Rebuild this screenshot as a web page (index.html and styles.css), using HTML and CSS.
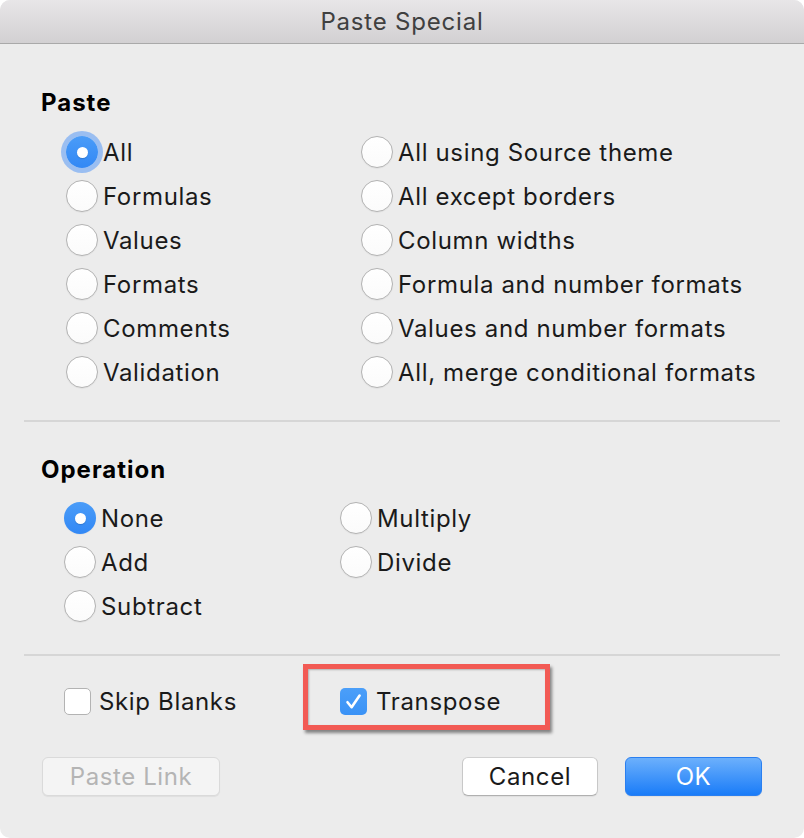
FILE: index.html
```html
<!DOCTYPE html>
<html>
<head>
<meta charset="utf-8">
<link rel="stylesheet" href="styles.css">
</head>
<body>
<div class="window">
  <div class="titlebar">Paste Special</div>
  <div class="content">
    <div class="section paste">
      <div class="heading">Paste</div>
      <div class="grid grid-paste">
        <div class="opt"><span class="radio on focus"></span><span>All</span></div>
        <div class="opt"><span class="radio"></span><span>All using Source theme</span></div>
        <div class="opt"><span class="radio"></span><span>Formulas</span></div>
        <div class="opt"><span class="radio"></span><span>All except borders</span></div>
        <div class="opt"><span class="radio"></span><span>Values</span></div>
        <div class="opt"><span class="radio"></span><span>Column widths</span></div>
        <div class="opt"><span class="radio"></span><span>Formats</span></div>
        <div class="opt"><span class="radio"></span><span>Formula and number formats</span></div>
        <div class="opt"><span class="radio"></span><span>Comments</span></div>
        <div class="opt"><span class="radio"></span><span>Values and number formats</span></div>
        <div class="opt"><span class="radio"></span><span>Validation</span></div>
        <div class="opt"><span class="radio"></span><span>All, merge conditional formats</span></div>
      </div>
    </div>
    <div class="sep sep1"></div>
    <div class="section operation">
      <div class="heading">Operation</div>
      <div class="grid grid-op">
        <div class="opt"><span class="radio on"></span><span>None</span></div>
        <div class="opt"><span class="radio"></span><span>Multiply</span></div>
        <div class="opt"><span class="radio"></span><span>Add</span></div>
        <div class="opt"><span class="radio"></span><span>Divide</span></div>
        <div class="opt"><span class="radio"></span><span>Subtract</span></div>
      </div>
    </div>
    <div class="sep sep2"></div>
    <div class="checks">
      <div class="opt check-skip"><span class="check"></span><span>Skip Blanks</span></div>
      <div class="highlight">
        <div class="opt"><span class="check on"><svg viewBox="0 0 27 27" width="27" height="27"><path d="M7.5 14.2 L11.6 19.2 L19.6 7.6" fill="none" stroke="#fff" stroke-width="2.6" stroke-linecap="round" stroke-linejoin="round"/></svg></span><span>Transpose</span></div>
      </div>
    </div>
  </div>
  <div class="buttons">
    <button class="btn disabled">Paste Link</button>
    <div class="spacer"></div>
    <button class="btn">Cancel</button>
    <button class="btn primary">OK</button>
  </div>
</div>
</body>
</html>
```
FILE: styles.css
```css
* { box-sizing: border-box; }
html, body { margin: 0; padding: 0; background: #ffffff; }
body { font-family: Inter, "Noto Sans", "Liberation Sans", sans-serif; color: #1e1e1e; }

.window {
  width: 804px;
  height: 838px;
  background: #ececec;
  border-radius: 10px;
  overflow: hidden;
  position: relative;
}

.titlebar {
  height: 44px;
  background: linear-gradient(#e8e6e8, #d2d0d2);
  border-bottom: 1px solid #a9a9a9;
  text-align: center;
  font-size: 24px;
  line-height: 44px;
  letter-spacing: 0.8px;
  color: #404040;
}

.content { padding: 0 24px; }

.heading {
  font-weight: 700;
  font-size: 24px;
  line-height: 28px;
  height: 28px;
  letter-spacing: 1px;
  color: #000;
  padding-left: 17px;
}

.paste { padding-top: 45px; }
.paste .heading { margin-bottom: 13px; }

.grid { display: grid; }
.grid-paste { grid-template-columns: 295px 1fr; padding-left: 42px; }
.grid-op { grid-template-columns: 276px 1fr; padding-left: 40px; }

.opt {
  display: flex;
  align-items: center;
  gap: 5px;
  height: 44px;
  font-size: 24px;
  letter-spacing: 0.65px;
  color: #1a1a1a;
}

.radio {
  width: 32px;
  height: 32px;
  border-radius: 50%;
  border: 1px solid #b3b3b3;
  background: linear-gradient(#ffffff, #fbfbfb);
  box-shadow: 0 0.5px 1px rgba(0,0,0,0.08);
  flex: none;
  position: relative;
}
.radio.on {
  border: none;
  background: linear-gradient(#4a9cf8, #3288f5);
}
.radio.on::after {
  content: "";
  position: absolute;
  left: 10.5px;
  top: 10.5px;
  width: 11px;
  height: 11px;
  border-radius: 50%;
  background: #fff;
  box-shadow: 0 1px 1px rgba(0,0,0,0.15);
}
.radio.focus { box-shadow: 0 0 0 5px rgba(100,160,245,0.6); }

.sep {
  height: 2px;
  background: #d6d6d6;
}
.sep1 { margin-top: 26px; }

.operation { padding-top: 34px; }
.operation .heading { margin-bottom: 12px; }

.sep2 { margin-top: 26px; }

.checks {
  display: flex;
  align-items: flex-start;
  padding-top: 8px;
}
.check-skip {
  padding-left: 40px;
  width: 279px;
  gap: 8px;
  margin-top: 24px;
  height: 27px;
}

.check {
  width: 27px;
  height: 27px;
  border-radius: 5px;
  border: 1px solid #b3b3b3;
  background: #fff;
  flex: none;
  display: flex;
}
.check.on { border: none; background: linear-gradient(#4b9ff9, #3a92f6); }

.highlight {
  width: 247px;
  height: 66px;
  border: 5px solid #f25a54;
  box-shadow: 2px 3px 3px rgba(0,0,0,0.45), inset 1px 1px 2px rgba(0,0,0,0.25);
  padding: 19px 0 0 32px;
}
.highlight .opt { gap: 9px; height: 27px; }

.buttons {
  display: flex;
  align-items: center;
  gap: 27px;
  padding: 27px 42px 0 42px;
}
.spacer { flex: 1; }
.buttons .spacer { margin-left: -27px; }

.btn {
  height: 39px;
  width: 136px;
  border-radius: 6px;
  border: 1px solid #c8c8c8;
  border-top-color: #d0d0d0;
  border-bottom-color: #b0b0b0;
  background: #fff;
  font-family: inherit;
  font-size: 24px;
  letter-spacing: 0.6px;
  color: #1a1a1a;
  padding: 0;
  box-shadow: 0 1px 1px rgba(0,0,0,0.06);
}
.btn.disabled {
  width: 178px;
  background: #f4f4f4;
  border-color: #dadada;
  color: #b4b4b4;
}
.btn.primary {
  width: 137px;
  border: 1px solid #2a7ff0;
  background: linear-gradient(#6cb0fc, #1a7cf8);
  color: #fff;
}
```
